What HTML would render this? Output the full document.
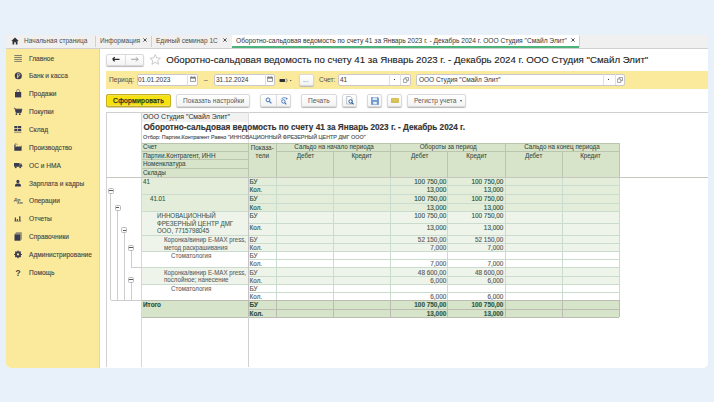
<!DOCTYPE html><html><head><meta charset="utf-8"><style>
*{box-sizing:border-box;margin:0;padding:0}
html,body{width:714px;height:402px;overflow:hidden;background:#e8f1fa;font-family:"Liberation Sans",sans-serif;color:#444}
.a{position:absolute}
.t{position:absolute;font-size:6.6px;line-height:8px;white-space:nowrap;-webkit-text-stroke:0.15px currentColor}
#win{position:absolute;left:6px;top:35px;width:702px;height:332.5px;background:#fff;border-radius:0 0 5px 5px;overflow:hidden}
.tab{position:absolute;top:0;height:12px;font-size:6.55px;line-height:12px;color:#4c4c4c;white-space:nowrap}
.sep{position:absolute;top:1px;width:1px;height:11px;background:#d0d0d0}
.si{position:absolute;left:29px;font-size:6.6px;color:#424242;-webkit-text-stroke:0.1px #424242;white-space:nowrap;line-height:8px}
.btn{position:absolute;background:linear-gradient(#fff,#f3f3f3);border:1px solid #d9d9d9;border-radius:2px;box-shadow:0 1px 1px #b8b8b8}
.inp{position:absolute;background:#fff;border:1px solid #c9c9c9;border-radius:2px}
.cal{position:absolute;width:6px;height:5px;border:1px solid #555;border-top-width:2px}
.dd{position:absolute;width:0;height:0;border-left:1.5px solid transparent;border-right:1.5px solid transparent;border-top:2px solid #555}
.op{position:absolute;width:5px;height:5px;border:1px solid #777}
.cell{position:absolute;overflow:hidden;white-space:nowrap;font-size:6.5px;line-height:8px;color:#3f4f3f}
</style></head><body>
<div id="win">
  <div class="a" style="left:0;top:0;width:702px;height:13.5px;background:#f0f0f0;border-bottom:1px solid #d0d0d0"></div>
  <div class="sep" style="left:573px"></div>
  <svg class="a" style="left:5px;top:2px" width="8" height="8" viewBox="0 0 8 8"><path d="M4 0.5 L0.3 4 H1.5 V7.5 H3.2 V5.2 H4.8 V7.5 H6.5 V4 H7.7 Z" fill="#333"/></svg>
  <div class="tab" style="left:18px">Начальная страница</div>
  <div class="sep" style="left:89px"></div>
  <div class="tab" style="left:94px">Информация</div>
  <svg class="a" style="left:137.2px;top:3.4px" width="4" height="4" viewBox="0 0 4 4"><path d="M0.4 0.4L3.6 3.6M3.6 0.4L0.4 3.6" stroke="#4a4a4a" stroke-width="0.95"/></svg>
  <div class="sep" style="left:145px"></div>
  <div class="tab" style="left:150px">Единый семинар 1С</div>
  <svg class="a" style="left:216.8px;top:3.4px" width="4" height="4" viewBox="0 0 4 4"><path d="M0.4 0.4L3.6 3.6M3.6 0.4L0.4 3.6" stroke="#4a4a4a" stroke-width="0.95"/></svg>
  <div class="a" style="left:226px;top:0;width:347px;height:13px;background:#fff;border-bottom:2px solid #4db37a"></div>
  <div class="tab" style="left:230px;color:#333;font-size:6.65px">Оборотно-сальдовая ведомость по счету 41 за Январь 2023 г. - Декабрь 2024 г. ООО Студия "Смайл Элит"</div>
  <svg class="a" style="left:565.2px;top:3.4px" width="4" height="4" viewBox="0 0 4 4"><path d="M0.4 0.4L3.6 3.6M3.6 0.4L0.4 3.6" stroke="#4a4a4a" stroke-width="0.95"/></svg>
  <div class="a" style="left:0;top:13.5px;width:94px;height:320px;background:#fbe99c;border-right:0.8px solid #e6d78a"></div>

<div class="si" style="left:23px;top:19.6px">Главное</div>
<div class="si" style="left:23px;top:37.4px">Банк и касса</div>
<div class="si" style="left:23px;top:55.3px">Продажи</div>
<div class="si" style="left:23px;top:73.1px">Покупки</div>
<div class="si" style="left:23px;top:91.0px">Склад</div>
<div class="si" style="left:23px;top:108.8px">Производство</div>
<div class="si" style="left:23px;top:126.6px">ОС и НМА</div>
<div class="si" style="left:23px;top:144.5px">Зарплата и кадры</div>
<div class="si" style="left:23px;top:162.3px">Операции</div>
<div class="si" style="left:23px;top:180.2px">Отчеты</div>
<div class="si" style="left:23px;top:198.0px">Справочники</div>
<div class="si" style="left:23px;top:215.8px">Администрирование</div>
<div class="si" style="left:23px;top:233.7px">Помощь</div>
</div>
<svg class="a" style="left:0;top:0" width="40" height="300" viewBox="0 0 40 300">
<path d="M14.3 55.5H21.9M14.3 57.45H21.9M14.3 59.4H21.9M14.3 61.4H21.9" stroke="#6a6a62" stroke-width="0.85"/>
<circle cx="18.3" cy="75.8" r="3.55" fill="#3a3a50"/>
<path d="M17.6 78.3V73.6H18.9A1.15 1.15 0 0 1 18.9 75.9H17.1M16.9 76.9H19" stroke="#fbe99c" stroke-width="0.75" fill="none" opacity="0.85"/>
<path d="M16.6 92.2V91A1.55 1.55 0 0 1 19.7 91V92.2" stroke="#7a7a70" stroke-width="0.8" fill="none"/>
<path d="M15 92H21.2V97.4H15Z" fill="#3a3a50"/>
<path d="M13.9 108.3H15.1L16.1 112.7H21L21.9 109.2H15.3" stroke="#3a3a50" stroke-width="0.8" fill="none"/>
<path d="M15.3 109.2H21.9L21 112.7H16.1Z" fill="#3a3a50"/>
<circle cx="16.4" cy="114.2" r="0.85" fill="#3a3a50"/><circle cx="19.8" cy="114.2" r="0.85" fill="#3a3a50"/>
<path d="M14.3 126.1H17.4V128.2H14.3ZM18 126.1H21.2V128.2H18ZM14.3 128.9H17.4V130.9H14.3ZM18 128.9H21.2V130.9H18Z" fill="#3a3a50"/>
<path d="M14.1 132.2H21.4" stroke="#3a3a50" stroke-width="0.6"/>
<path d="M14.3 150.7V146.2H15.6V147.2L17.6 145.8V147.2L19.6 145.8V147.2L21.6 145.5V150.7Z" fill="#3a3a50"/>
<path d="M14.3 146.4V144.5H15.6V146.4Z" fill="#3a3a50"/>
<path d="M15.2 143.8H16.3M16.6 144.4H17.4" stroke="#3a3a50" stroke-width="0.7"/>
<path d="M14 162.9H19.3V166.8H14ZM19.5 163.6H21.2L22.2 165V166.8H19.5Z" fill="#3a3a50"/>
<path d="M20.2 164.2H21.1L21.6 165H20.2Z" fill="#fbe99c" opacity="0.7"/>
<circle cx="15.8" cy="167.3" r="0.9" fill="#3a3a50"/><circle cx="20.2" cy="167.3" r="0.9" fill="#3a3a50"/>
<ellipse cx="17.9" cy="181.4" rx="1.55" ry="1.75" fill="#3a3a50"/>
<path d="M15 186.5V185.6C15 184.2 16.3 183.6 17.9 183.6C19.5 183.6 21 184.2 21 185.6V186.5Z" fill="#3a3a50"/>
<text x="14.1" y="200.8" font-size="3.9" font-style="italic" font-weight="bold" font-family="Liberation Sans" fill="#555">Дт</text>
<text x="17.3" y="204.2" font-size="3.6" font-style="italic" font-weight="bold" font-family="Liberation Sans" fill="#555">Кт</text>
<path d="M14.8 217.4H15.9V221H14.8ZM16.8 219H17.8V221H16.8ZM19.2 216.2H20.4V221H19.2Z" fill="#3a3a50"/>
<path d="M14.3 221.2H21.2" stroke="#3a3a50" stroke-width="0.55"/>
<path d="M16.1 232.2H22L20.4 234.4H14.5Z" fill="#8e8c74"/>
<path d="M20.4 234.4L22 232.2V239L20.4 240.7Z" fill="#9c9a80"/>
<path d="M14.5 234.4H20.4V240.7H14.5Z" fill="#3a3a50"/>
<circle cx="18" cy="254.4" r="2.35" fill="none" stroke="#3a3a50" stroke-width="1.4"/>
<path d="M18 250.6V258.2M14.2 254.4H21.8M15.3 251.7L20.7 257.1M15.3 257.1L20.7 251.7" stroke="#3a3a50" stroke-width="1.05"/>
<circle cx="18" cy="254.4" r="1.05" fill="#fbe99c"/>
<text x="15.6" y="275.6" font-size="8.4" font-weight="bold" font-family="Liberation Sans" fill="#4a4444">?</text>
</svg>

<div class="btn" style="left:106px;top:53.5px;width:37.5px;height:12px"></div>
<div class="a" style="left:125px;top:54.5px;width:1px;height:10px;background:#dedede"></div>
<svg class="a" style="left:111px;top:56px" width="10" height="7" viewBox="0 0 10 7"><path d="M1.6 3.3H8.5M1.6 3.3L3.7 1.2M1.6 3.3L3.7 5.4" stroke="#2a2a2a" stroke-width="1.25" fill="none"/></svg>
<svg class="a" style="left:129.5px;top:56px" width="10" height="7" viewBox="0 0 10 7"><path d="M8.1 3.3H1.2M8.1 3.3L6 1.2M8.1 3.3L6 5.4" stroke="#a0a0a0" stroke-width="1" fill="none"/></svg>
<svg class="a" style="left:149px;top:53.6px" width="13" height="11" viewBox="0 0 13 11"><path d="M6.2 0.6L7.7 3.9L11.4 4.2L8.6 6.6L9.5 10.3L6.2 8.3L2.9 10.3L3.8 6.6L1 4.2L4.7 3.9Z" stroke="#bdbdbd" stroke-width="0.8" fill="none"/></svg>
<div class="a" style="left:166.3px;top:53.6px;font-size:9.68px;line-height:12px;color:#1c1c1c;white-space:nowrap;-webkit-text-stroke:0.12px #1c1c1c">Оборотно-сальдовая ведомость по счету 41 за Январь 2023 г. - Декабрь 2024 г. ООО Студия "Смайл Элит"</div>
<div class="a" style="left:106px;top:71px;width:602px;height:17.5px;background:#fbe99c"></div>
<div class="t" style="left:109px;top:76px;color:#525252;-webkit-text-stroke:0.04px #525252">Период:</div>
<div class="inp" style="left:136.5px;top:73.5px;width:61.8px;height:12.5px"></div>
<div class="t" style="left:138.3px;top:75.6px;color:#3a3f46;font-size:7px;line-height:8px;transform:scaleX(0.925);transform-origin:0 0;-webkit-text-stroke:0.05px #3a3f46">01.01.2023</div>
<div class="a" style="left:187.2px;top:74px;width:1px;height:11px;background:#e0e0e0"></div>
<svg class="a" style="left:190px;top:76px" width="6" height="6" viewBox="0 0 6 6"><path d="M0.3 1.2H5.5V5.4H0.3Z" fill="none" stroke="#707070" stroke-width="0.7"/><path d="M0.3 1.2H5.5V2.6H0.3Z" fill="#707070"/><path d="M1.4 0.2V1.2M4.4 0.2V1.2" stroke="#707070" stroke-width="0.6"/></svg>
<div class="t" style="left:204px;top:76px;color:#555">–</div>
<div class="inp" style="left:213.8px;top:73.5px;width:61.5px;height:12.5px"></div>
<div class="t" style="left:215.5px;top:75.6px;color:#3a3f46;font-size:7px;line-height:8px;transform:scaleX(0.925);transform-origin:0 0;-webkit-text-stroke:0.05px #3a3f46">31.12.2024</div>
<div class="a" style="left:264.5px;top:74px;width:1px;height:11px;background:#e0e0e0"></div>
<svg class="a" style="left:267.3px;top:76px" width="6" height="6" viewBox="0 0 6 6"><path d="M0.3 1.2H5.5V5.4H0.3Z" fill="none" stroke="#707070" stroke-width="0.7"/><path d="M0.3 1.2H5.5V2.6H0.3Z" fill="#707070"/><path d="M1.4 0.2V1.2M4.4 0.2V1.2" stroke="#707070" stroke-width="0.6"/></svg>
<svg class="a" style="left:279px;top:77.5px" width="14" height="5" viewBox="0 0 14 5"><rect x="0.5" y="0.9" width="5.6" height="3.2" rx="0.8" fill="#2f2f3a"/><path d="M6.6 0.9A1.6 1.6 0 0 1 6.6 4.1" stroke="#555" stroke-width="0.6" fill="none"/><path d="M10.8 2.1L12.6 2.1L11.7 3.3Z" fill="#444"/></svg>
<div class="btn" style="left:299px;top:73.5px;width:15px;height:12.5px"></div>
<div class="t" style="left:303px;top:76px;color:#888">...</div>
<div class="t" style="left:319px;top:76px;color:#525252;-webkit-text-stroke:0.04px #525252">Счет:</div>
<div class="inp" style="left:338px;top:73.5px;width:73px;height:12.5px"></div>
<div class="t" style="left:339.8px;top:75.6px;color:#3a3f46;font-size:7px;line-height:8px;transform:scaleX(0.925);transform-origin:0 0;-webkit-text-stroke:0.05px #3a3f46">41</div>
<div class="a" style="left:389px;top:74px;width:1px;height:11px;background:#e0e0e0"></div>
<div class="a" style="left:399.5px;top:74px;width:1px;height:11px;background:#e0e0e0"></div>
<div class="a" style="left:393.6px;top:78.6px;width:1.4px;height:1.4px;background:#333"></div>
<svg class="a" style="left:402.8px;top:76.8px" width="6" height="6" viewBox="0 0 6 6"><path d="M2 0.4H5.5V3.6H2Z" fill="none" stroke="#666" stroke-width="0.6"/><path d="M0.4 2H3.8V5.4H0.4Z" fill="#fff" stroke="#666" stroke-width="0.6"/></svg>
<div class="inp" style="left:416px;top:73.5px;width:209px;height:12.5px"></div>
<div class="t" style="left:418.5px;top:75.6px;color:#3a3f46;font-size:7px;line-height:8px;transform:scaleX(0.925);transform-origin:0 0;-webkit-text-stroke:0.05px #3a3f46">ООО Студия "Смайл Элит"</div>
<div class="a" style="left:603px;top:74px;width:1px;height:11px;background:#e0e0e0"></div>
<div class="a" style="left:615px;top:74px;width:1px;height:11px;background:#e0e0e0"></div>
<div class="a" style="left:608px;top:78.6px;width:1.4px;height:1.4px;background:#333"></div>
<svg class="a" style="left:616.8px;top:76.8px" width="6" height="6" viewBox="0 0 6 6"><path d="M2 0.4H5.5V3.6H2Z" fill="none" stroke="#666" stroke-width="0.6"/><path d="M0.4 2H3.8V5.4H0.4Z" fill="#fff" stroke="#666" stroke-width="0.6"/></svg>

<div class="a" style="left:106px;top:94px;width:65px;height:12.8px;background:#f6e20c;border:1px solid #c4ae1e;border-radius:2px;box-shadow:0 0.6px 0 #b5a24a,inset 0 0 0 0.7px #ece070"></div>
<div class="t" style="left:113px;top:96.8px;color:#2a2a2a;font-weight:normal;font-size:6.9px;letter-spacing:0.2px;-webkit-text-stroke:0.25px #2a2a2a">Сформировать</div>
<div class="btn" style="left:176px;top:94px;width:74px;height:13px"></div>
<div class="t" style="left:183px;top:97px;color:#5a5a5a;-webkit-text-stroke:0px">Показать настройки</div>
<div class="btn" style="left:260px;top:94px;width:31px;height:13px"></div>
<div class="a" style="left:276px;top:95px;width:1px;height:11px;background:#dcdcdc"></div>
<div class="btn" style="left:301px;top:94px;width:36px;height:13px"></div>
<div class="t" style="left:308px;top:97px;color:#5a5a5a;-webkit-text-stroke:0px">Печать</div>
<div class="btn" style="left:342px;top:94px;width:15px;height:13px"></div>
<div class="btn" style="left:367px;top:94px;width:15px;height:13px"></div>
<div class="btn" style="left:387px;top:94px;width:15px;height:13px"></div>
<div class="btn" style="left:407px;top:94px;width:59px;height:13px"></div>
<div class="t" style="left:414px;top:97px;color:#5a5a5a;-webkit-text-stroke:0px">Регистр учета</div>
<div class="dd" style="left:459.5px;top:100.4px"></div>
<svg class="a" style="left:264.6px;top:97.4px" width="8" height="8" viewBox="0 0 8 8"><circle cx="3" cy="2.9" r="1.95" fill="none" stroke="#3a70b8" stroke-width="0.95"/><path d="M4.4 4.3L6.4 6.3" stroke="#3a70b8" stroke-width="1.2"/></svg>
<svg class="a" style="left:279.8px;top:96.6px" width="9" height="9" viewBox="0 0 9 9"><path d="M1.2 2.4A3.2 2.6 0 0 1 6.8 1.8" stroke="#3a70b8" stroke-width="0.75" fill="none"/><path d="M6 0.6L7.8 1.4L6.6 2.8Z" fill="#3a70b8"/><circle cx="3.4" cy="4.4" r="1.7" fill="none" stroke="#3a70b8" stroke-width="0.9"/><path d="M4.6 5.6L6.3 7.4" stroke="#3a70b8" stroke-width="1.15"/></svg>
<svg class="a" style="left:345.5px;top:96px" width="9" height="9" viewBox="0 0 9 9"><path d="M0.7 0.5H4.5L6 2V8H0.7Z" fill="#fff" stroke="#8a9ab0" stroke-width="0.6"/><circle cx="4.6" cy="5.4" r="1.7" fill="none" stroke="#2a5a9a" stroke-width="1"/><path d="M5.8 6.6L7.6 8.4" stroke="#2a5a9a" stroke-width="1.3"/></svg>
<svg class="a" style="left:370.5px;top:96.5px" width="8" height="8" viewBox="0 0 8 8"><path d="M0.3 0.3H6.6L7.6 1.3V7.4H0.3Z" fill="#6c9ad2" stroke="#4c78b0" stroke-width="0.5"/><path d="M1.6 0.5H6V3H1.6Z" fill="#dfe9f5"/><path d="M2.2 4.8H5.8V7.3H2.2Z" fill="#e8eef6"/></svg>
<svg class="a" style="left:390.8px;top:97.8px" width="8" height="5" viewBox="0 0 8 5"><path d="M0.2 0.2H7.6V4.6H0.2Z" fill="#d8be45" stroke="#b89d2a" stroke-width="0.4"/><path d="M0.4 0.4L3.9 2.8L7.4 0.4" stroke="#f3e49a" stroke-width="0.5" fill="none"/></svg>

<div class="a" style="left:106px;top:112px;width:602px;height:1px;background:#cfcfcf"></div>
<div class="a" style="left:106px;top:112px;width:1px;height:255px;background:#d2d2d2"></div>
<div class="a" style="left:141px;top:112px;width:1px;height:255px;background:#d6d6d6"></div>
<div class="a" style="left:142px;top:113px;width:106px;height:9px;background:#f2f2f2"></div>
<div class="t" style="left:143px;top:113px;font-size:6.9px;color:#333;-webkit-text-stroke:0.04px #333">ООО Студия "Смайл Элит"</div>
<div class="a" style="left:247.5px;top:112px;width:1px;height:31px;background:#dedede"></div>
<div class="t" style="left:143.5px;top:122.6px;font-size:8.2px;line-height:10px;font-weight:bold;color:#333">Оборотно-сальдовая ведомость по счету 41 за Январь 2023 г. - Декабрь 2024 г.</div>
<div class="t" style="left:143px;top:133.5px;font-size:5.42px;line-height:7px;color:#555">Отбор: Партии.Контрагент Равно "ИННОВАЦИОННЫЙ ФРЕЗЕРНЫЙ ЦЕНТР ДМГ ООО"</div>
<div class="a" style="left:141.5px;top:143.0px;width:477.5px;height:34.0px;background:#d7e4ca"></div>
<div class="a" style="left:141.5px;top:142.5px;width:477.5px;height:1.0px;background:#b9c6ad"></div>
<div class="a" style="left:141.5px;top:150.9px;width:106.5px;height:1.0px;background:#b9c6ad"></div>
<div class="a" style="left:141.5px;top:159.2px;width:106.5px;height:1.0px;background:#b9c6ad"></div>
<div class="a" style="left:141.5px;top:167.9px;width:106.5px;height:1.0px;background:#b9c6ad"></div>
<div class="a" style="left:276.5px;top:150.9px;width:342.5px;height:1.0px;background:#b9c6ad"></div>
<div class="a" style="left:247.5px;top:143.0px;width:1.0px;height:34.0px;background:#b9c6ad"></div>
<div class="a" style="left:276.0px;top:143.0px;width:1.0px;height:34.0px;background:#b9c6ad"></div>
<div class="a" style="left:390.1px;top:143.0px;width:1.0px;height:34.0px;background:#b9c6ad"></div>
<div class="a" style="left:504.5px;top:143.0px;width:1.0px;height:34.0px;background:#b9c6ad"></div>
<div class="a" style="left:618.5px;top:143.0px;width:1.0px;height:34.0px;background:#b9c6ad"></div>
<div class="a" style="left:332.8px;top:151.4px;width:1.0px;height:25.6px;background:#b9c6ad"></div>
<div class="a" style="left:447.4px;top:151.4px;width:1.0px;height:25.6px;background:#b9c6ad"></div>
<div class="a" style="left:561.7px;top:151.4px;width:1.0px;height:25.6px;background:#b9c6ad"></div>
<div class="a" style="left:618.5px;top:143.0px;width:1.0px;height:34.0px;background:#b9c6ad"></div>
<div class="t" style="left:143px;top:143.2px;color:#35463b;-webkit-text-stroke:0.05px #35463b;font-size:6.9px;transform:scaleX(0.92);transform-origin:0 0">Счет</div>
<div class="t" style="left:143px;top:151.6px;color:#35463b;-webkit-text-stroke:0.05px #35463b;font-size:6.9px;transform:scaleX(0.92);transform-origin:0 0">Партии.Контрагент, ИНН</div>
<div class="t" style="left:143px;top:159.9px;color:#35463b;-webkit-text-stroke:0.05px #35463b;font-size:6.9px;transform:scaleX(0.92);transform-origin:0 0">Номенклатура</div>
<div class="t" style="left:143px;top:168.6px;color:#35463b;-webkit-text-stroke:0.05px #35463b;font-size:6.9px;transform:scaleX(0.92);transform-origin:0 0">Склады</div>
<div class="t" style="left:248px;width:28.5px;top:144px;text-align:center;line-height:7.5px;color:#35463b;-webkit-text-stroke:0.05px #35463b;white-space:normal;font-size:6.9px;transform:scaleX(0.92)">Показа-<br>тели</div>
<div class="t" style="left:276.5px;width:114.1px;top:143.2px;text-align:center;color:#35463b;-webkit-text-stroke:0.05px #35463b;font-size:6.9px;transform:scaleX(0.91)">Сальдо на начало периода</div>
<div class="t" style="left:390.6px;width:114.4px;top:143.2px;text-align:center;color:#35463b;-webkit-text-stroke:0.05px #35463b;font-size:6.9px;transform:scaleX(0.91)">Обороты за период</div>
<div class="t" style="left:505.0px;width:114.0px;top:143.2px;text-align:center;color:#35463b;-webkit-text-stroke:0.05px #35463b;font-size:6.9px;transform:scaleX(0.91)">Сальдо на конец периода</div>
<div class="t" style="left:276.5px;width:56.8px;top:151.6px;text-align:center;color:#35463b;-webkit-text-stroke:0.05px #35463b;font-size:6.9px;transform:scaleX(0.91)">Дебет</div>
<div class="t" style="left:333.3px;width:57.3px;top:151.6px;text-align:center;color:#35463b;-webkit-text-stroke:0.05px #35463b;font-size:6.9px;transform:scaleX(0.91)">Кредит</div>
<div class="t" style="left:390.6px;width:57.3px;top:151.6px;text-align:center;color:#35463b;-webkit-text-stroke:0.05px #35463b;font-size:6.9px;transform:scaleX(0.91)">Дебет</div>
<div class="t" style="left:447.9px;width:57.1px;top:151.6px;text-align:center;color:#35463b;-webkit-text-stroke:0.05px #35463b;font-size:6.9px;transform:scaleX(0.91)">Кредит</div>
<div class="t" style="left:505.0px;width:57.2px;top:151.6px;text-align:center;color:#35463b;-webkit-text-stroke:0.05px #35463b;font-size:6.9px;transform:scaleX(0.91)">Дебет</div>
<div class="t" style="left:562.2px;width:56.8px;top:151.6px;text-align:center;color:#35463b;-webkit-text-stroke:0.05px #35463b;font-size:6.9px;transform:scaleX(0.91)">Кредит</div>
<div class="a" style="left:141.5px;top:177.0px;width:477.5px;height:17.5px;background:#e3edda"></div>
<div class="a" style="left:141.5px;top:194.5px;width:477.5px;height:16.8px;background:#e3edda"></div>
<div class="a" style="left:141.5px;top:211.3px;width:477.5px;height:24.0px;background:#eff4eb"></div>
<div class="a" style="left:141.5px;top:235.3px;width:477.5px;height:16.1px;background:#eff4eb"></div>
<div class="a" style="left:141.5px;top:251.4px;width:477.5px;height:16.5px;background:#ffffff"></div>
<div class="a" style="left:141.5px;top:267.9px;width:477.5px;height:16.2px;background:#eff4eb"></div>
<div class="a" style="left:141.5px;top:284.1px;width:477.5px;height:15.9px;background:#ffffff"></div>
<div class="a" style="left:141.5px;top:300.0px;width:477.5px;height:17.4px;background:#d6e4c9"></div>
<div class="a" style="left:248.0px;top:185.2px;width:371.0px;height:1.0px;background:#c9dccd"></div>
<div class="a" style="left:141.5px;top:194.0px;width:477.5px;height:1.0px;background:#c9dccd"></div>
<div class="a" style="left:248.0px;top:202.8px;width:371.0px;height:1.0px;background:#c9dccd"></div>
<div class="a" style="left:141.5px;top:210.8px;width:477.5px;height:1.0px;background:#c9dccd"></div>
<div class="a" style="left:248.0px;top:223.0px;width:371.0px;height:1.0px;background:#c9dccd"></div>
<div class="a" style="left:141.5px;top:234.8px;width:477.5px;height:1.0px;background:#c9dccd"></div>
<div class="a" style="left:248.0px;top:242.9px;width:371.0px;height:1.0px;background:#c9dccd"></div>
<div class="a" style="left:141.5px;top:250.9px;width:477.5px;height:1.0px;background:#c9dccd"></div>
<div class="a" style="left:248.0px;top:259.0px;width:371.0px;height:1.0px;background:#c9dccd"></div>
<div class="a" style="left:141.5px;top:267.4px;width:477.5px;height:1.0px;background:#c9dccd"></div>
<div class="a" style="left:248.0px;top:275.6px;width:371.0px;height:1.0px;background:#c9dccd"></div>
<div class="a" style="left:141.5px;top:283.6px;width:477.5px;height:1.0px;background:#c9dccd"></div>
<div class="a" style="left:248.0px;top:291.9px;width:371.0px;height:1.0px;background:#c9dccd"></div>
<div class="a" style="left:141.5px;top:299.5px;width:477.5px;height:1.0px;background:#c9dccd"></div>
<div class="a" style="left:276.0px;top:177.0px;width:1.0px;height:123.0px;background:#c9dccd"></div>
<div class="a" style="left:332.8px;top:177.0px;width:1.0px;height:123.0px;background:#c9dccd"></div>
<div class="a" style="left:390.1px;top:177.0px;width:1.0px;height:123.0px;background:#c9dccd"></div>
<div class="a" style="left:447.4px;top:177.0px;width:1.0px;height:123.0px;background:#c9dccd"></div>
<div class="a" style="left:504.5px;top:177.0px;width:1.0px;height:123.0px;background:#c9dccd"></div>
<div class="a" style="left:561.7px;top:177.0px;width:1.0px;height:123.0px;background:#c9dccd"></div>
<div class="a" style="left:618.5px;top:177.0px;width:1.0px;height:123.0px;background:#c9dccd"></div>
<div class="a" style="left:247.5px;top:177.0px;width:1.0px;height:123.0px;background:#c9c4c4"></div>
<div class="t" style="left:143.0px;top:177.8px;font-size:6.9px;line-height:7.6px;transform:scaleX(0.895);transform-origin:0 0;-webkit-text-stroke:0.08px currentColor;color:#2a5646">41</div>
<div class="t" style="left:249.6px;top:177.6px;font-size:6.3px;color:#2a5646">БУ</div>
<div class="t" style="left:249.6px;top:186.2px;font-size:6.3px;color:#2a5646">Кол.</div>
<div class="t" style="left:390.6px;width:55.7px;top:177.6px;font-size:6.4px;text-align:right;color:#2a5646">100 750,00</div>
<div class="t" style="left:390.6px;width:55.7px;top:186.2px;font-size:6.4px;text-align:right;color:#2a5646">13,000</div>
<div class="t" style="left:447.9px;width:55.5px;top:177.6px;font-size:6.4px;text-align:right;color:#2a5646">100 750,00</div>
<div class="t" style="left:447.9px;width:55.5px;top:186.2px;font-size:6.4px;text-align:right;color:#2a5646">13,000</div>
<div class="t" style="left:149.8px;top:195.3px;font-size:6.9px;line-height:7.6px;transform:scaleX(0.895);transform-origin:0 0;-webkit-text-stroke:0.08px currentColor;color:#2a5646">41.01</div>
<div class="t" style="left:249.6px;top:195.1px;font-size:6.3px;color:#2a5646">БУ</div>
<div class="t" style="left:249.6px;top:203.8px;font-size:6.3px;color:#2a5646">Кол.</div>
<div class="t" style="left:390.6px;width:55.7px;top:195.1px;font-size:6.4px;text-align:right;color:#2a5646">100 750,00</div>
<div class="t" style="left:390.6px;width:55.7px;top:203.8px;font-size:6.4px;text-align:right;color:#2a5646">13,000</div>
<div class="t" style="left:447.9px;width:55.5px;top:195.1px;font-size:6.4px;text-align:right;color:#2a5646">100 750,00</div>
<div class="t" style="left:447.9px;width:55.5px;top:203.8px;font-size:6.4px;text-align:right;color:#2a5646">13,000</div>
<div class="t" style="left:156.6px;top:212.1px;font-size:6.9px;line-height:7.6px;transform:scaleX(0.895);transform-origin:0 0;-webkit-text-stroke:0.08px currentColor;color:#3a5c56">ИННОВАЦИОННЫЙ<br>ФРЕЗЕРНЫЙ ЦЕНТР ДМГ<br>ООО, 7715798045</div>
<div class="t" style="left:249.6px;top:211.9px;font-size:6.3px;color:#3a5c56">БУ</div>
<div class="t" style="left:249.6px;top:224.0px;font-size:6.3px;color:#3a5c56">Кол.</div>
<div class="t" style="left:390.6px;width:55.7px;top:211.9px;font-size:6.4px;text-align:right;color:#3a5c56">100 750,00</div>
<div class="t" style="left:390.6px;width:55.7px;top:224.0px;font-size:6.4px;text-align:right;color:#3a5c56">13,000</div>
<div class="t" style="left:447.9px;width:55.5px;top:211.9px;font-size:6.4px;text-align:right;color:#3a5c56">100 750,00</div>
<div class="t" style="left:447.9px;width:55.5px;top:224.0px;font-size:6.4px;text-align:right;color:#3a5c56">13,000</div>
<div class="t" style="left:163.8px;top:236.1px;font-size:6.9px;line-height:7.6px;transform:scaleX(0.895);transform-origin:0 0;-webkit-text-stroke:0.08px currentColor;color:#5e5e5e">Коронка/винир E-MAX press,<br>метод раскрашивания</div>
<div class="t" style="left:249.6px;top:235.9px;font-size:6.3px;color:#5e5e5e">БУ</div>
<div class="t" style="left:249.6px;top:243.9px;font-size:6.3px;color:#5e5e5e">Кол.</div>
<div class="t" style="left:390.6px;width:55.7px;top:235.9px;font-size:6.4px;text-align:right;color:#5e5e5e">52 150,00</div>
<div class="t" style="left:390.6px;width:55.7px;top:243.9px;font-size:6.4px;text-align:right;color:#5e5e5e">7,000</div>
<div class="t" style="left:447.9px;width:55.5px;top:235.9px;font-size:6.4px;text-align:right;color:#5e5e5e">52 150,00</div>
<div class="t" style="left:447.9px;width:55.5px;top:243.9px;font-size:6.4px;text-align:right;color:#5e5e5e">7,000</div>
<div class="t" style="left:171.3px;top:252.2px;font-size:6.9px;line-height:7.6px;transform:scaleX(0.895);transform-origin:0 0;-webkit-text-stroke:0.08px currentColor;color:#5e5e5e">Стоматология</div>
<div class="t" style="left:249.6px;top:252.0px;font-size:6.3px;color:#5e5e5e">БУ</div>
<div class="t" style="left:249.6px;top:260.0px;font-size:6.3px;color:#5e5e5e">Кол.</div>
<div class="t" style="left:390.6px;width:55.7px;top:260.0px;font-size:6.4px;text-align:right;color:#5e5e5e">7,000</div>
<div class="t" style="left:447.9px;width:55.5px;top:260.0px;font-size:6.4px;text-align:right;color:#5e5e5e">7,000</div>
<div class="t" style="left:163.8px;top:268.7px;font-size:6.9px;line-height:7.6px;transform:scaleX(0.895);transform-origin:0 0;-webkit-text-stroke:0.08px currentColor;color:#5e5e5e">Коронка/винир E-MAX press,<br>послойное; нанесение</div>
<div class="t" style="left:249.6px;top:268.5px;font-size:6.3px;color:#5e5e5e">БУ</div>
<div class="t" style="left:249.6px;top:276.6px;font-size:6.3px;color:#5e5e5e">Кол.</div>
<div class="t" style="left:390.6px;width:55.7px;top:268.5px;font-size:6.4px;text-align:right;color:#5e5e5e">48 600,00</div>
<div class="t" style="left:390.6px;width:55.7px;top:276.6px;font-size:6.4px;text-align:right;color:#5e5e5e">6,000</div>
<div class="t" style="left:447.9px;width:55.5px;top:268.5px;font-size:6.4px;text-align:right;color:#5e5e5e">48 600,00</div>
<div class="t" style="left:447.9px;width:55.5px;top:276.6px;font-size:6.4px;text-align:right;color:#5e5e5e">6,000</div>
<div class="t" style="left:171.3px;top:284.9px;font-size:6.9px;line-height:7.6px;transform:scaleX(0.895);transform-origin:0 0;-webkit-text-stroke:0.08px currentColor;color:#5e5e5e">Стоматология</div>
<div class="t" style="left:249.6px;top:284.7px;font-size:6.3px;color:#5e5e5e">БУ</div>
<div class="t" style="left:249.6px;top:292.9px;font-size:6.3px;color:#5e5e5e">Кол.</div>
<div class="t" style="left:390.6px;width:55.7px;top:292.9px;font-size:6.4px;text-align:right;color:#5e5e5e">6,000</div>
<div class="t" style="left:447.9px;width:55.5px;top:292.9px;font-size:6.4px;text-align:right;color:#5e5e5e">6,000</div>
<div class="t" style="left:143px;top:300.8px;font-size:6.4px;font-weight:bold;color:#2f4f40">Итого</div>
<div class="t" style="left:249.6px;top:300.6px;font-size:6.4px;font-weight:bold;color:#2f4f40">БУ</div>
<div class="t" style="left:249.6px;top:309.7px;font-size:6.4px;font-weight:bold;color:#2f4f40">Кол.</div>
<div class="t" style="left:390.6px;width:55.7px;top:300.6px;font-size:6.4px;font-weight:bold;text-align:right;color:#2f5a4a">100 750,00</div>
<div class="t" style="left:390.6px;width:55.7px;top:309.7px;font-size:6.4px;font-weight:bold;text-align:right;color:#2f5a4a">13,000</div>
<div class="t" style="left:447.9px;width:55.5px;top:300.6px;font-size:6.4px;font-weight:bold;text-align:right;color:#2f5a4a">100 750,00</div>
<div class="t" style="left:447.9px;width:55.5px;top:309.7px;font-size:6.4px;font-weight:bold;text-align:right;color:#2f5a4a">13,000</div>
<div class="a" style="left:141.5px;top:299.5px;width:477.5px;height:1.0px;background:#bcbcb2"></div>
<div class="a" style="left:248.0px;top:308.9px;width:371.0px;height:1.0px;background:#bcbcb2"></div>
<div class="a" style="left:141.5px;top:316.9px;width:477.5px;height:1.0px;background:#bcbcb2"></div>
<div class="a" style="left:247.5px;top:300.0px;width:1.0px;height:17.4px;background:#bcbcb2"></div>
<div class="a" style="left:276.0px;top:300.0px;width:1.0px;height:17.4px;background:#bcbcb2"></div>
<div class="a" style="left:332.8px;top:300.0px;width:1.0px;height:17.4px;background:#bcbcb2"></div>
<div class="a" style="left:390.1px;top:300.0px;width:1.0px;height:17.4px;background:#bcbcb2"></div>
<div class="a" style="left:447.4px;top:300.0px;width:1.0px;height:17.4px;background:#bcbcb2"></div>
<div class="a" style="left:504.5px;top:300.0px;width:1.0px;height:17.4px;background:#bcbcb2"></div>
<div class="a" style="left:561.7px;top:300.0px;width:1.0px;height:17.4px;background:#bcbcb2"></div>
<div class="a" style="left:618.5px;top:300.0px;width:1.0px;height:17.4px;background:#bcbcb2"></div>
<div class="a" style="left:247.5px;top:317.4px;width:1.0px;height:49.6px;background:#d2d2d2"></div>
<div class="a" style="left:106.0px;top:176.5px;width:602.0px;height:1.0px;background:#c6c8c0"></div>
<div class="a" style="left:110.4px;top:193.4px;width:1.0px;height:106.6px;background:#cdcdcd"></div>
<div class="a" style="left:117.2px;top:210.6px;width:1.0px;height:89.4px;background:#cdcdcd"></div>
<div class="a" style="left:123.9px;top:232.7px;width:1.0px;height:67.3px;background:#cdcdcd"></div>
<div class="a" style="left:130.5px;top:250.3px;width:1.0px;height:17.2px;background:#cdcdcd"></div>
<div class="a" style="left:130.5px;top:282.7px;width:1.0px;height:17.3px;background:#cdcdcd"></div>
<div class="a" style="left:110.9px;top:299.5px;width:30.1px;height:1.0px;background:#cdcdcd"></div>
<div class="a" style="left:131.0px;top:267.0px;width:10.0px;height:1.0px;background:#cdcdcd"></div>
<div class="a" style="left:107.9px;top:187.6px;width:6px;height:6px;background:#fafafa;border:0.8px solid #b8b8b8;border-radius:1.5px"></div>
<div class="a" style="left:109.2px;top:190.2px;width:3.4px;height:0.85px;background:#5a5a5a"></div>
<div class="a" style="left:114.7px;top:204.7px;width:6px;height:6px;background:#fafafa;border:0.8px solid #b8b8b8;border-radius:1.5px"></div>
<div class="a" style="left:116.0px;top:207.2px;width:3.4px;height:0.85px;background:#5a5a5a"></div>
<div class="a" style="left:121.4px;top:226.9px;width:6px;height:6px;background:#fafafa;border:0.8px solid #b8b8b8;border-radius:1.5px"></div>
<div class="a" style="left:122.7px;top:229.5px;width:3.4px;height:0.85px;background:#5a5a5a"></div>
<div class="a" style="left:128.0px;top:244.7px;width:6px;height:6px;background:#fafafa;border:0.8px solid #b8b8b8;border-radius:1.5px"></div>
<div class="a" style="left:129.3px;top:247.2px;width:3.4px;height:0.85px;background:#5a5a5a"></div>
<div class="a" style="left:128.0px;top:276.9px;width:6px;height:6px;background:#fafafa;border:0.8px solid #b8b8b8;border-radius:1.5px"></div>
<div class="a" style="left:129.3px;top:279.4px;width:3.4px;height:0.85px;background:#5a5a5a"></div>
</body></html>
